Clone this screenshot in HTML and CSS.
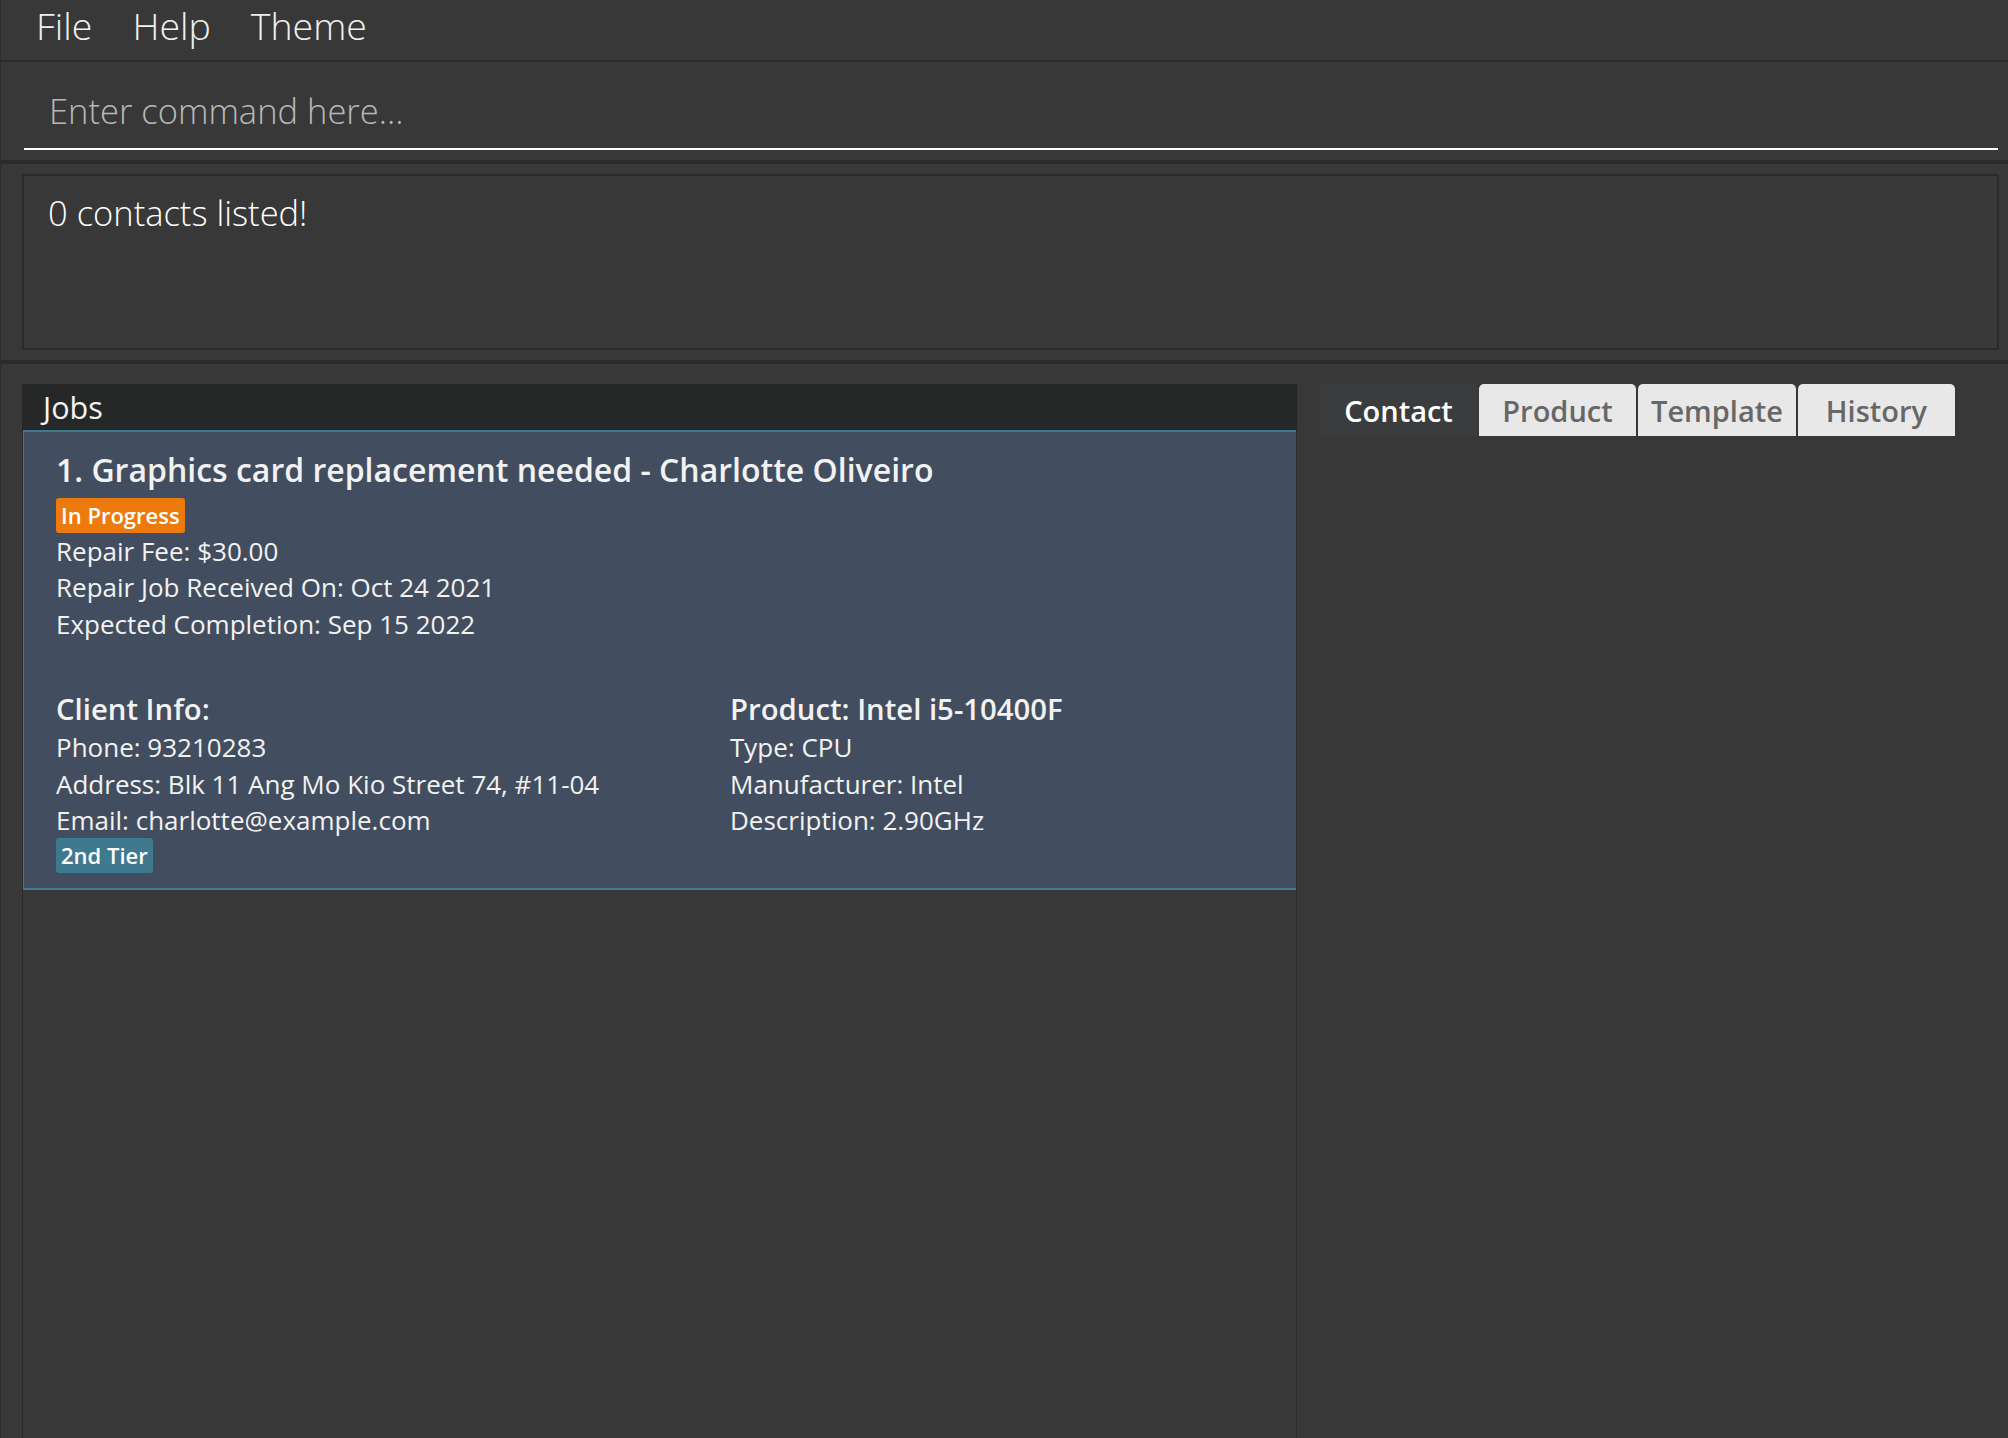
FILE: index.html
```html
<!DOCTYPE html>
<html lang="en">
<head>
<meta charset="utf-8">
<title>Repair Jobs</title>
<link rel="stylesheet" href="styles.css">
</head>
<body>
<div class="app">
  <nav class="menubar">
    <span class="menu-item">File</span>
    <span class="menu-item">Help</span>
    <span class="menu-item">Theme</span>
  </nav>
  <section class="command">
    <div class="command-field">Enter command here...</div>
  </section>
  <section class="result">
    <div class="result-box">0 contacts listed!</div>
  </section>
  <main class="main">
    <section class="jobs">
      <header class="jobs-header">Jobs</header>
      <div class="jobs-list">
        <article class="card">
          <h1 class="card-title">1. Graphics card replacement needed - Charlotte Oliveiro</h1>
          <span class="badge badge-progress">In Progress</span>
          <div class="lines">
            <div>Repair Fee: $30.00</div>
            <div>Repair Job Received On: Oct 24 2021</div>
            <div>Expected Completion: Sep 15 2022</div>
          </div>
          <div class="card-cols">
            <div class="col col-client">
              <h2 class="col-title">Client Info:</h2>
              <div class="lines">
                <div>Phone: 93210283</div>
                <div>Address: Blk 11 Ang Mo Kio Street 74, #11-04</div>
                <div>Email: charlotte@example.com</div>
              </div>
              <span class="badge badge-tier">2nd Tier</span>
            </div>
            <div class="col">
              <h2 class="col-title">Product: Intel i5-10400F</h2>
              <div class="lines">
                <div>Type: CPU</div>
                <div>Manufacturer: Intel</div>
                <div>Description: 2.90GHz</div>
              </div>
            </div>
          </div>
        </article>
      </div>
    </section>
    <section class="tabs-pane">
      <div class="tabs">
        <div class="tab tab-active">Contact</div>
        <div class="tab">Product</div>
        <div class="tab">Template</div>
        <div class="tab">History</div>
      </div>
    </section>
  </main>
</div>
</body>
</html>
```

FILE: styles.css
```css
* { box-sizing: border-box; }

html, body {
  margin: 0;
  padding: 0;
  background: #383838;
}

body {
  font-family: "Open Sans", "Noto Sans", sans-serif;
  color: #f2f2f2;
}

.app {
  width: 2008px;
  height: 1438px;
  display: flex;
  flex-direction: column;
  border-left: 1px solid #2c2c2c;
  overflow: hidden;
}

/* Menu bar */
.menubar {
  height: 62px;
  flex: none;
  display: flex;
  align-items: flex-start;
  gap: 40px;
  padding-left: 35px;
  border-bottom: 2px solid #2b2b2b;
}

.menu-item {
  font-size: 37.5px;
  font-weight: 300;
  line-height: normal;
  color: #f0f0f0;
}

/* Command box */
.command {
  flex: none;
  padding: 0 10px 10px 23px;
  border-bottom: 4px solid #2b2b2b;
}

.command-field {
  padding: 26px 0 14px 25px;
  font-size: 34.5px;
  font-weight: 300;
  line-height: 46px;
  color: #b8b8b8;
  border-bottom: 2px solid #ffffff;
}

/* Result display */
.result {
  flex: none;
  padding: 10px 9px 10px 21px;
  border-bottom: 4px solid #2b2b2b;
}

.result-box {
  height: 176px;
  border: 2px solid #2a2a2a;
  padding: 14px 0 0 24px;
  font-size: 34.5px;
  font-weight: 300;
  line-height: 46px;
  color: #ffffff;
}

/* Main area */
.main {
  flex: 1;
  display: flex;
  padding-top: 20px;
  min-height: 0;
}

.jobs {
  width: 1296px;
  flex: none;
  padding-left: 21px;
  display: flex;
  flex-direction: column;
}

.jobs-header {
  height: 46px;
  flex: none;
  background: #262828;
  padding: 1px 0 0 21px;
  font-size: 30.5px;
  line-height: 45px;
  color: #f4f4f4;
}

.jobs-list {
  flex: 1;
  border-left: 1px solid #2a2a2a;
  border-right: 1px solid #2a2a2a;
}

.card {
  background: #424e5f;
  border-top: 2px solid #3d7b90;
  border-bottom: 2px solid #3d7b90;
  border-left: 1px solid #3d7b90;
  padding: 17px 0 15px 32px;
  display: flex;
  flex-direction: column;
  align-items: flex-start;
}

.card-title {
  margin: 0;
  font-size: 32px;
  font-weight: 600;
  line-height: 42px;
  color: #f2f2f2;
}

.badge {
  display: inline-block;
  height: 35px;
  padding: 0 5px;
  border-radius: 3px;
  font-size: 22px;
  font-weight: 600;
  line-height: 35px;
  color: #ffffff;
}

.badge-progress {
  margin-top: 7px;
  background: #ec7a0d;
}

.badge-tier {
  margin-top: 0;
  background: #3e7990;
}

.lines {
  font-size: 26px;
  line-height: 36.4px;
  color: #f2f2f2;
}

.card-cols {
  display: grid;
  grid-template-columns: 674px 1fr;
  margin-top: 48px;
  width: 100%;
}

.col {
  display: flex;
  flex-direction: column;
  align-items: flex-start;
}

.col-title {
  margin: 0 0 1px;
  font-size: 29.3px;
  font-weight: 600;
  line-height: 38px;
  color: #f2f2f2;
}

/* Tabs */
.tabs-pane {
  flex: 1;
  padding-left: 23px;
}

.tabs {
  display: flex;
  gap: 2px;
}

.tab {
  height: 52px;
  min-width: 157px;
  padding: 2px 13px 0;
  border-radius: 5px 5px 0 0;
  background: #e8e8e8;
  color: #676767;
  font-size: 29px;
  font-weight: 600;
  line-height: 50px;
  text-align: center;
}

.tab-active {
  background: #3b3c3e;
  color: #ffffff;
}
```
